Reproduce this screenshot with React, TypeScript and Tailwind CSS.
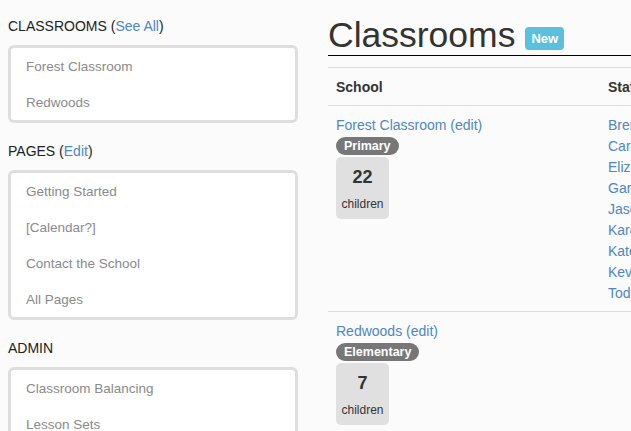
import React from "react";

const LINK = "text-[#4f87c0]";

function SideSection({ title, link, items }: { title: string; link?: string; items: string[] }) {
  return (
    <div className="mb-[18px]">
      <div className="text-[14px] leading-[20px] text-[#222] mb-[9px]">
        {title}
        {link && (
          <>
            {" ("}
            <span className={LINK}>{link}</span>
            {")"}
          </>
        )}
      </div>
      <div className="border-[3px] border-[#dedede] rounded-[6px] bg-white">
        {items.map((it) => (
          <div key={it} className="h-[36px] leading-[37px] pl-[15px] text-[13.5px] text-[#8a8a8a]">
            {it}
          </div>
        ))}
      </div>
    </div>
  );
}

function SchoolCell({ name, level, count }: { name: string; level: string; count: number }) {
  return (
    <div className="flex flex-col items-start">
      <div className={`text-[14px] leading-[20px] ${LINK}`}>
        {name} (edit)
      </div>
      <span className="mt-[2px] block h-[18px] rounded-full bg-[#777] text-white font-bold text-[12.5px] leading-[18px] px-[8px]">
        {level}
      </span>
      <div className="mt-[2px] w-[53px] h-[62px] bg-[#e0e0e0] rounded-[5px] text-center text-[#333] pt-[10px]">
        <div className="text-[18px] leading-[20px] font-bold">{count}</div>
        <div className="mt-[9px] text-[12px] leading-[16px]">children</div>
      </div>
    </div>
  );
}

export default function App() {
  const names = ["Brenda", "Carlos", "Eliza", "Gary", "Jason", "Karen", "Kate", "Kevin", "Todd"];
  return (
    <div className="w-full h-[431px] overflow-hidden bg-[#fbfbfb] font-['Liberation_Sans',Arial,sans-serif] flex">
      <aside className="ml-[8px] w-[290px] shrink-0 pt-[16px]">
        <SideSection title="CLASSROOMS" link="See All" items={["Forest Classroom", "Redwoods"]} />
        <SideSection
          title="PAGES"
          link="Edit"
          items={["Getting Started", "[Calendar?]", "Contact the School", "All Pages"]}
        />
        <SideSection title="ADMIN" items={["Classroom Balancing", "Lesson Sets", "Settings"]} />
      </aside>
      <main className="ml-[30px] w-[600px] shrink-0 pt-[15px]">
        <div className="flex h-[41px] border-b border-black">
          <h1 className="text-[35.5px] leading-[40px] text-[#333] font-normal">Classrooms</h1>
          <span className="self-end mb-[5px] ml-[10px] h-[23px] px-[6px] rounded-[4px] bg-[#5bc0de] text-white font-bold text-[13px] leading-[23px]">
            New
          </span>
        </div>
        <table className="mt-[11px] border-collapse w-full">
          <thead>
            <tr className="border-t border-b border-[#ddd]">
              <th className="w-[272px] text-left font-bold text-[14px] leading-[20px] text-[#333] pt-[9px] pb-[8px] px-[8px]">
                School
              </th>
              <th className="text-left font-bold text-[14px] leading-[20px] text-[#333] pt-[9px] pb-[8px] px-[8px]">
                Staff
              </th>
            </tr>
          </thead>
          <tbody>
            <tr className="border-b border-[#ddd]">
              <td className="align-top pt-[9px] pb-[7px] px-[8px]">
                <SchoolCell name="Forest Classroom" level="Primary" count={22} />
              </td>
              <td className="align-top pt-[9px] pb-[7px] px-[8px]">
                {names.map((n) => (
                  <div key={n} className={`text-[14px] leading-[21px] ${LINK}`}>
                    {n}
                  </div>
                ))}
              </td>
            </tr>
            <tr>
              <td className="align-top pt-[9px] pb-[7px] px-[8px]">
                <SchoolCell name="Redwoods" level="Elementary" count={7} />
              </td>
              <td className="align-top pt-[9px] pb-[7px] px-[8px]"></td>
            </tr>
          </tbody>
        </table>
      </main>
    </div>
  );
}
